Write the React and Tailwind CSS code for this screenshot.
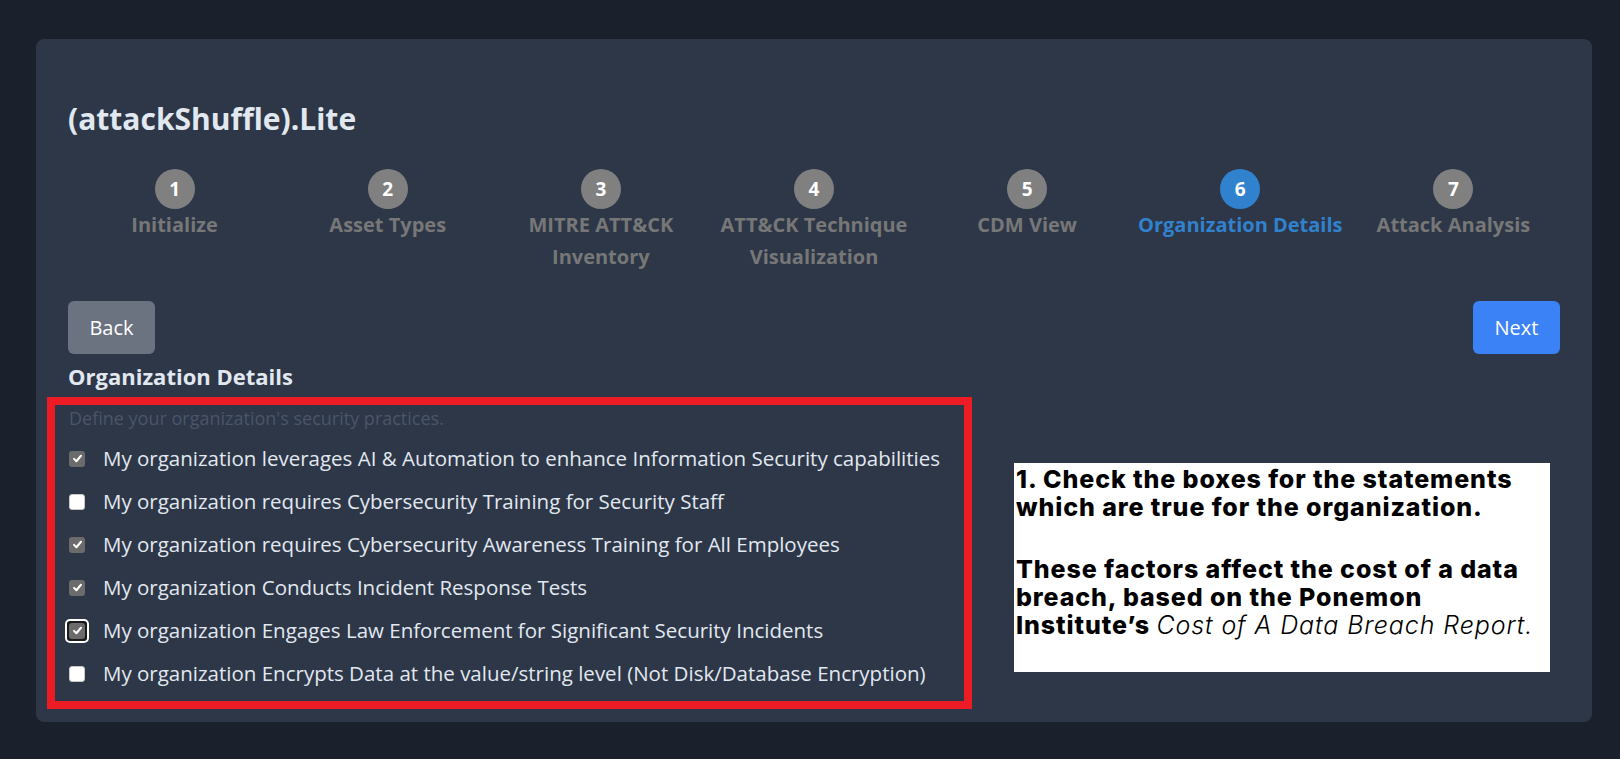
import React from 'react';

const steps = [
  { n: 1, label: ['Initialize'] },
  { n: 2, label: ['Asset Types'] },
  { n: 3, label: ['MITRE ATT&CK', 'Inventory'] },
  { n: 4, label: ['ATT&CK Technique', 'Visualization'] },
  { n: 5, label: ['CDM View'] },
  { n: 6, label: ['Organization Details'], active: true },
  { n: 7, label: ['Attack Analysis'] },
];

const practices = [
  { text: 'My organization leverages AI & Automation to enhance Information Security capabilities', checked: true },
  { text: 'My organization requires Cybersecurity Training for Security Staff', checked: false },
  { text: 'My organization requires Cybersecurity Awareness Training for All Employees', checked: true },
  { text: 'My organization Conducts Incident Response Tests', checked: true },
  { text: 'My organization Engages Law Enforcement for Significant Security Incidents', checked: true, focused: true },
  { text: 'My organization Encrypts Data at the value/string level (Not Disk/Database Encryption)', checked: false },
];

function Check({ checked, focused }) {
  const box = checked ? (
    <span className="flex h-4 w-4 items-center justify-center rounded-[3px] bg-[#6b6b6b]">
      <svg width="11" height="11" viewBox="0 0 12 12" fill="none">
        <path d="M2.2 6.4 4.8 9 9.8 3" stroke="#ffffff" strokeWidth="2.2" strokeLinecap="round" strokeLinejoin="round" />
      </svg>
    </span>
  ) : (
    <span className="block h-4 w-4 rounded-[3px] border border-[#c8c8c8] bg-white" />
  );
  if (!focused) return box;
  return (
    <span className="-m-[4px] flex rounded-[5px] border-2 border-white bg-[#1b1b1b] p-[2px]">{box}</span>
  );
}

export default function App() {
  return (
    <div className="min-h-screen bg-[#1a202c] pt-[39px] pl-[36px]" style={{ fontFamily: '"Open Sans", "Noto Sans", sans-serif' }}>
      <div className="h-[683px] w-[1556px] rounded-lg bg-[#2d3748] px-8 pt-[62px]">
        <h1 className="text-[30px] leading-9 font-bold text-[#e2e8f0]">(attackShuffle).Lite</h1>

        {/* STEPPER */}
        <div className="mt-8 grid grid-cols-7">
          {steps.map((s) => (
            <div key={s.n} className="flex flex-col items-center">
              <div
                className={
                  s.active
                    ? 'flex h-10 w-10 items-center justify-center rounded-full bg-[#3182ce] text-[19px] font-bold text-white'
                    : 'flex h-10 w-10 items-center justify-center rounded-full bg-[#808080] text-[19px] font-bold text-white'
                }
              >
                {s.n}
              </div>
              <div
                className={
                  s.active
                    ? 'text-center text-[20px] leading-8 font-bold text-[#3182ce]'
                    : 'text-center text-[20px] leading-8 font-bold text-[#777777]'
                }
              >
                {s.label.map((l) => (
                  <div key={l}>{l}</div>
                ))}
              </div>
            </div>
          ))}
        </div>

        {/* NAV */}
        <div className="mt-[28px] flex justify-between">
          <button className="h-[53px] w-[87px] rounded-md bg-[#6b7280] text-[20px] text-white">Back</button>
          <button className="h-[53px] w-[87px] rounded-md bg-[#3b82f6] text-[20px] text-white">Next</button>
        </div>

        <h2 className="mt-[9px] text-[22px] leading-[26px] font-bold text-[#e2e8f0]">Organization Details</h2>

        <div className="mt-[8px] flex">
          <div className="-ml-[21px] w-[925px] border-[8px] border-[#ed1c24] pt-[1px] pb-[6px] pl-[14px]">
            <p className="text-[18px] leading-6 text-[#4a5568]">Define your organization's security practices.</p>
            <div className="mt-[7px]">
              {practices.map((p) => (
                <div key={p.text} className="flex h-[43px] items-center gap-[18px]">
                  <Check checked={p.checked} focused={p.focused} />
                  <span className="text-[20.5px] whitespace-nowrap text-[#e2e8f0]">{p.text}</span>
                </div>
              ))}
            </div>
          </div>

          <div className="mt-[66px] ml-[42px] h-[209px] w-[536px] bg-white pt-[2px] pl-[2px] text-black" style={{ fontFamily: 'Inter, "Noto Sans", sans-serif' }}>
            <p className="text-[25px] leading-[28px] font-extrabold tracking-[0.9px]">
              1. Check the boxes for the statements
              <br />
              which are true for the organization.
            </p>
            <p className="mt-[34px] text-[25px] leading-[28px] font-extrabold tracking-[0.9px]">
              These factors affect the cost of a data
              <br />
              breach, based on the Ponemon
              <br />
              Institute’s <span className="font-light italic">Cost of A Data Breach Report.</span>
            </p>
          </div>
        </div>
      </div>
    </div>
  );
}
